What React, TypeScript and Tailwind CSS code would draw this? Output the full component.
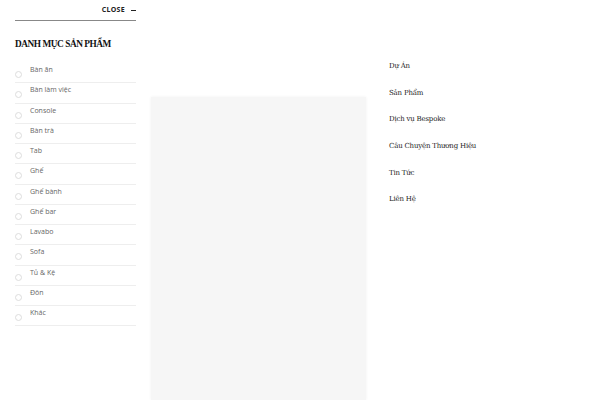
const categories = [
  "Bàn ăn",
  "Bàn làm việc",
  "Console",
  "Bàn trà",
  "Tab",
  "Ghế",
  "Ghế bành",
  "Ghế bar",
  "Lavabo",
  "Sofa",
  "Tủ & Kệ",
  "Đôn",
  "Khác",
];

const menu = ["Dự Án", "Sản Phẩm", "Dịch vụ Bespoke", "Câu Chuyện Thương Hiệu", "Tin Tức", "Liên Hệ"];

export default function App() {
  return (
    <div className="w-[600px] h-[400px] bg-white overflow-hidden flex">
      <aside className="w-[121px] ml-[15px] shrink-0 font-['Open_Sans',sans-serif]">
        <div className="h-[21px] border-b border-[#888] flex items-center justify-end gap-[6px] pt-[1px]">
          <span className="text-[7px] font-bold tracking-[0.3px] text-[#222]">CLOSE</span>
          <span className="w-[5px] h-[1px] bg-[#222]" />
        </div>
        <h2 className="mt-[17px] whitespace-nowrap text-[9.3px] leading-[12px] font-bold text-[#111] font-['Liberation_Serif',serif] tracking-[-0.45px]">
          DANH MỤC SẢN PHẨM
        </h2>
        <ul className="mt-[13px]">
          {categories.map((c) => (
            <li key={c} className="h-[20.25px] border-b border-[#eee] flex relative">
              <span className="absolute left-[0px] top-[8px] w-[7px] h-[7px] rounded-full border border-[#ddd]" />
              <span className="ml-[15px] mt-[2px] text-[7px] leading-[10px] text-[#666]">{c}</span>
            </li>
          ))}
        </ul>
      </aside>
      <div className="ml-[15px] mt-[97px] w-[215px] h-[303px] bg-[#f6f6f6] shadow-[0_0_3px_rgba(0,0,0,0.06)] shrink-0" />
      <nav className="ml-[23px] mt-[60px] flex flex-col font-['DejaVu_Serif',serif]">
        {menu.map((m) => (
          <a key={m} className="h-[26.7px] text-[7px] leading-[12px] text-[#222] tracking-[-0.2px]">
            {m}
          </a>
        ))}
      </nav>
    </div>
  );
}
